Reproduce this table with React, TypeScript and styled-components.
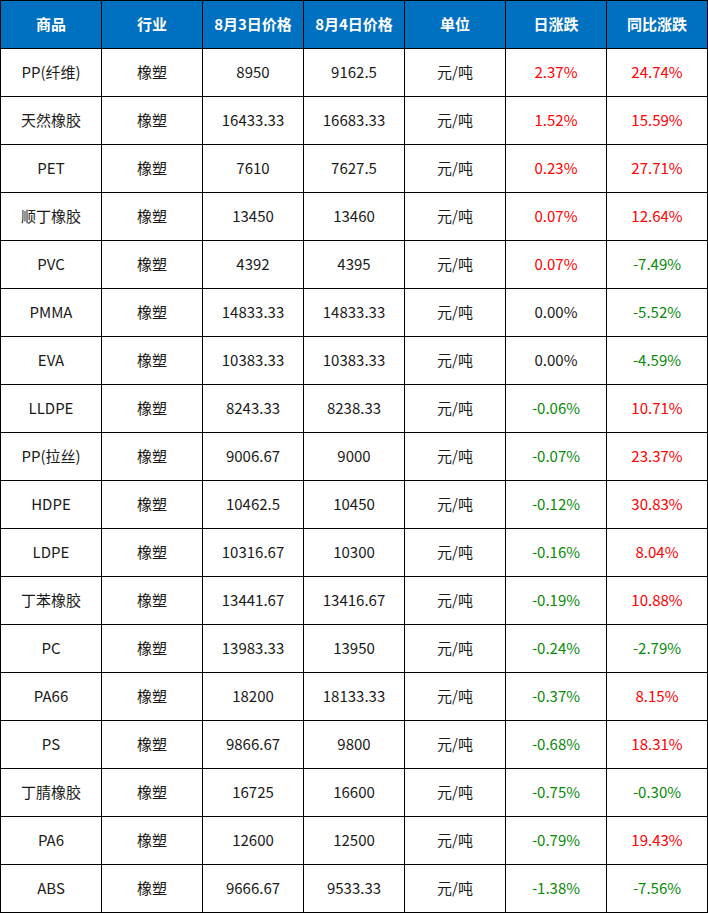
import React from "react";
import styled, { createGlobalStyle } from "styled-components";

const Global = createGlobalStyle`
  html, body { margin: 0; padding: 0; background: #fff; }
  body { font-family: "Noto Sans CJK SC", "Noto Sans", sans-serif; }
`;

const Table = styled.table`
  width: 708px;
  table-layout: fixed;
  border-collapse: collapse;
  font-family: "Noto Sans CJK SC", "Noto Sans", sans-serif;
  font-size: 15px;
  color: #1a1a1a;
`;

const HeadRow = styled.tr`
  height: 48px;
  background: #0070c0;
`;

const Row = styled.tr`
  height: 48px;
  background: #fff;
`;

const Th = styled.th`
  border: 1px solid #000;
  padding: 0 0 2px;
  color: #fff;
  font-weight: 700;
  text-align: center;
  vertical-align: middle;
  white-space: nowrap;
`;

type Tone = "up" | "down" | "flat";

const Td = styled.td<{ $tone?: Tone }>`
  border: 1px solid #000;
  padding: 0 0 2px;
  text-align: center;
  vertical-align: middle;
  white-space: nowrap;
  color: ${(p) => (p.$tone === "up" ? "#ff0000" : p.$tone === "down" ? "#0a8a0a" : "#1a1a1a")};
`;

const headers = ["商品", "行业", "8月3日价格", "8月4日价格", "单位", "日涨跌", "同比涨跌"];

const rows: [string, string, string, string, string][] = [
  ["PP(纤维)", "8950", "9162.5", "2.37%", "24.74%"],
  ["天然橡胶", "16433.33", "16683.33", "1.52%", "15.59%"],
  ["PET", "7610", "7627.5", "0.23%", "27.71%"],
  ["顺丁橡胶", "13450", "13460", "0.07%", "12.64%"],
  ["PVC", "4392", "4395", "0.07%", "-7.49%"],
  ["PMMA", "14833.33", "14833.33", "0.00%", "-5.52%"],
  ["EVA", "10383.33", "10383.33", "0.00%", "-4.59%"],
  ["LLDPE", "8243.33", "8238.33", "-0.06%", "10.71%"],
  ["PP(拉丝)", "9006.67", "9000", "-0.07%", "23.37%"],
  ["HDPE", "10462.5", "10450", "-0.12%", "30.83%"],
  ["LDPE", "10316.67", "10300", "-0.16%", "8.04%"],
  ["丁苯橡胶", "13441.67", "13416.67", "-0.19%", "10.88%"],
  ["PC", "13983.33", "13950", "-0.24%", "-2.79%"],
  ["PA66", "18200", "18133.33", "-0.37%", "8.15%"],
  ["PS", "9866.67", "9800", "-0.68%", "18.31%"],
  ["丁腈橡胶", "16725", "16600", "-0.75%", "-0.30%"],
  ["PA6", "12600", "12500", "-0.79%", "19.43%"],
  ["ABS", "9666.67", "9533.33", "-1.38%", "-7.56%"],
];

const tone = (v: string): Tone => {
  const n = parseFloat(v);
  if (n > 0) return "up";
  if (n < 0) return "down";
  return "flat";
};

export default function App() {
  return (
    <>
      <Global />
      <Table lang="zh-CN">
        <thead>
          <HeadRow>
            {headers.map((h) => (
              <Th key={h}>{h}</Th>
            ))}
          </HeadRow>
        </thead>
        <tbody>
          {rows.map(([name, p1, p2, d, y]) => (
            <Row key={name}>
              <Td>{name}</Td>
              <Td>橡塑</Td>
              <Td>{p1}</Td>
              <Td>{p2}</Td>
              <Td>元/吨</Td>
              <Td $tone={tone(d)}>{d}</Td>
              <Td $tone={tone(y)}>{y}</Td>
            </Row>
          ))}
        </tbody>
      </Table>
    </>
  );
}
